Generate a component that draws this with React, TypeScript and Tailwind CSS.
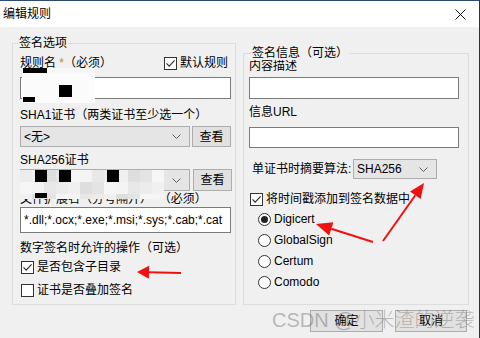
import React from "react";

const FONT = "font-['Liberation_Sans','Noto_Sans_CJK_SC',sans-serif]";

function Check({ checked, label }: { checked?: boolean; label: string }) {
  return (
    <div className="flex items-center gap-[3px] h-[14px]">
      <span className="w-[13px] h-[13px] shrink-0 border border-[#333] bg-white flex items-center justify-center">
        {checked && (
          <svg width="11" height="11" viewBox="0 0 11 11">
            <path d="M1.5 5.3 L4.2 8.2 L9.6 2.3" fill="none" stroke="#333" strokeWidth="1.2" />
          </svg>
        )}
      </span>
      <span className="whitespace-nowrap">{label}</span>
    </div>
  );
}

function Radio({ checked, label }: { checked?: boolean; label: string }) {
  return (
    <div className="flex items-center gap-[3px] h-[14px] ml-[9px]">
      <span className="w-[13px] h-[13px] shrink-0 rounded-full border border-[#333] bg-white flex items-center justify-center">
        {checked && <span className="w-[7px] h-[7px] rounded-full bg-[#222]" />}
      </span>
      <span className="whitespace-nowrap">{label}</span>
    </div>
  );
}

function Combo({ value, className }: { value: string; className: string }) {
  return (
    <div className={`flex items-center border border-[#adadad] bg-[#e5e5e5] pl-[3px] pr-[8px] ${className}`}>
      <span className="flex-1 whitespace-nowrap">{value}</span>
      <svg width="9" height="5" viewBox="0 0 9 5">
        <path d="M0.5 0.5 L4.5 4.5 L8.5 0.5" fill="none" stroke="#606060" />
      </svg>
    </div>
  );
}

function Btn({ children, className }: { children: React.ReactNode; className: string }) {
  return (
    <div className={`flex items-center justify-center border border-[#adadad] bg-[#e1e1e1] ${className}`}>
      {children}
    </div>
  );
}

function LeftGroup() {
  return (
    <div className="relative mt-[16px] w-[224px] h-[262px] border border-[#dcdcdc] pl-[7px]">
      <span className="absolute top-[-8px] left-[5px] px-[1px] bg-[#f0f0f0]">签名选项</span>
      <div className="mt-[12px] w-[211px] h-[14px] flex items-center justify-between pr-[3px]">
        <span>
          规则名 <span className="text-[#c8891c]">*</span>（必须）
        </span>
        <Check checked label="默认规则" />
      </div>
      <div className="mt-[7px] w-[211px] h-[22px] border border-[#7a7a7a] bg-white" />
      <div className="mt-[9px] h-[14px]">SHA1证书（两类证书至少选一个）</div>
      <div className="mt-[4px] flex gap-[2px]">
        <Combo value="<无>" className="w-[170px] h-[21px]" />
        <Btn className="w-[39px] h-[21px]">查看</Btn>
      </div>
      <div className="mt-[6px] h-[14px]">SHA256证书</div>
      <div className="mt-[2px] flex gap-[3px]">
        <Combo value="" className="w-[170px] h-[22px]" />
        <Btn className="w-[39px] h-[22px]">查看</Btn>
      </div>
      <div className="mt-[1px] h-[14px] whitespace-pre">文件扩展名（分号隔开）  （必须）</div>
      <div className="mt-[1px] w-[211px] h-[26px] border border-[#7a7a7a] bg-white flex items-center pl-[3px] whitespace-nowrap overflow-hidden">
        *.dll;*.ocx;*.exe;*.msi;*.sys;*.cab;*.cat
      </div>
      <div className="mt-[8px] h-[14px]">数字签名时允许的操作（可选）</div>
      <div className="mt-[5px] ml-[1px]">
        <Check checked label="是否包含子目录" />
      </div>
      <div className="mt-[9px] ml-[1px]">
        <Check label="证书是否叠加签名" />
      </div>
    </div>
  );
}

function RightGroup() {
  return (
    <div className="relative mt-[26px] w-[226px] h-[252px] border border-[#dcdcdc] pl-[5px]">
      <span className="absolute top-[-8px] left-[7px] px-[1px] bg-[#f0f0f0]">签名信息（可选）</span>
      <div className="mt-[5px] h-[14px]">内容描述</div>
      <div className="mt-[4px] w-[210px] h-[22px] border border-[#7a7a7a] bg-white" />
      <div className="mt-[6px] h-[14px]">信息URL</div>
      <div className="mt-[8px] w-[210px] h-[21px] border border-[#7a7a7a] bg-white" />
      <div className="mt-[11px] flex items-center">
        <span className="w-[104px] pl-[3px] whitespace-nowrap">单证书时摘要算法:</span>
        <Combo value="SHA256" className="w-[84px] h-[20px]" />
      </div>
      <div className="mt-[13px] ml-[1px]">
        <Check checked label="将时间戳添加到签名数据中" />
      </div>
      <div className="mt-[6px] flex flex-col gap-[7px]">
        <Radio checked label="Digicert" />
        <Radio label="GlobalSign" />
        <Radio label="Certum" />
        <Radio label="Comodo" />
      </div>
    </div>
  );
}

const mosaic: [number, number, number, number, string][] = [
  [22, 72, 73, 31, "#fbfbfb"],
  [47, 68, 48, 5, "#f7f7f7"],
  [23, 68, 24, 5, "#000"],
  [59, 85, 13, 12, "#000"],
  [23, 97, 12, 5, "#000"],
];

const grays = ["#ececec", "#f4f4f4", "#e4e4e4", "#f0f0f0", "#e8e8e8", "#f6f6f6", "#dedede"];
for (let r = 0; r < 3; r++) {
  for (let c = 0; c < 12; c++) {
    mosaic.push([20 + c * 12, 170 + r * 12, 12, r === 2 ? 5 : 12, grays[(r * 5 + c * 3) % grays.length]]);
  }
}
mosaic.push([35, 170, 12, 12, "#000"], [59, 170, 12, 12, "#000"], [107, 170, 12, 12, "#000"], [35, 193, 12, 5, "#000"]);

function arrow(x1: number, y1: number, x2: number, y2: number, hl: number, hw: number) {
  const dx = x2 - x1;
  const dy = y2 - y1;
  const len = Math.hypot(dx, dy);
  const ux = dx / len;
  const uy = dy / len;
  const bx = x2 - ux * hl;
  const by = y2 - uy * hl;
  const px = -uy * (hw / 2);
  const py = ux * (hw / 2);
  return (
    <g key={`${x1}-${y1}`}>
      <line x1={x1} y1={y1} x2={bx} y2={by} stroke="#f01010" strokeWidth="2" />
      <polygon points={`${x2},${y2} ${bx + px},${by + py} ${bx - px},${by - py}`} fill="#f01010" />
    </g>
  );
}

export default function App() {
  return (
    <div
      className={`${FONT} relative w-[480px] h-[338px] overflow-hidden bg-[#f0f0f0] text-[12px] leading-[14px] text-black border-t border-t-[#2b4a6e] border-r border-r-[#1f3550] flex flex-col`}
    >
      <div className="h-[26px] bg-white flex items-center justify-between pl-[3px] pr-[13px]">
        <span>编辑规则</span>
        <svg width="11" height="11" viewBox="0 0 11 11">
          <path d="M0.5 0.5 L10.5 10.5 M10.5 0.5 L0.5 10.5" stroke="#111" strokeWidth="1" />
        </svg>
      </div>
      <div className="flex items-start pl-[12px] gap-[7px]">
        <LeftGroup />
        <RightGroup />
      </div>
      <div className="flex justify-end gap-[12px] pr-[12px] mt-[5px]">
        <Btn className="w-[73px] h-[22px]">确定</Btn>
        <Btn className="w-[72px] h-[22px]">取消</Btn>
      </div>

      {mosaic.map(([x, y, w, h, c], i) => (
        <div key={i} className="absolute" style={{ left: x, top: y - 1, width: w, height: h, background: c }} />
      ))}

      <div className="absolute left-[272px] top-[306px] text-[20px] leading-[26px] text-[rgba(110,110,110,0.45)] whitespace-nowrap font-light">
        CSDN @小米渣的逆袭
      </div>

      <svg className="absolute left-0 top-0 pointer-events-none" width="480" height="338" viewBox="0 -1 480 338">
        {arrow(181, 271, 137, 270, 12, 13)}
        {arrow(383, 239, 424, 181, 15, 13)}
        {arrow(373, 240, 316, 222, 16, 14)}
      </svg>
    </div>
  );
}
